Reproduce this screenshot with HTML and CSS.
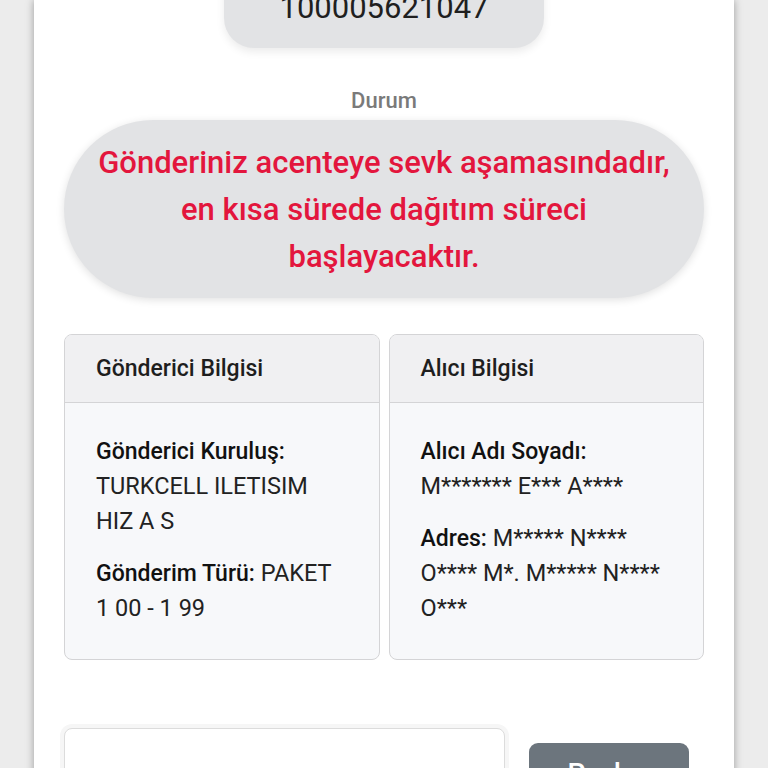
FILE: index.html
```html
<!DOCTYPE html>
<html lang="tr">
<head>
<meta charset="utf-8">
<title>Gönderi Takip</title>
<link rel="stylesheet" href="styles.css">
</head>
<body>
<main class="page">
  <div class="code-pill">100005621047</div>
  <div class="status-label">Durum</div>
  <div class="status-pill">Gönderiniz acenteye sevk aşamasındadır,<br>en kısa sürede dağıtım süreci<br>başlayacaktır.</div>
  <section class="cards">
    <div class="card">
      <div class="card-head">Gönderici Bilgisi</div>
      <div class="card-body">
        <p><b>Gönderici Kuruluş:</b><br>TURKCELL ILETISIM<br>HIZ A S</p>
        <p><b>Gönderim Türü:</b> PAKET<br>1 00 - 1 99</p>
      </div>
    </div>
    <div class="card">
      <div class="card-head">Alıcı Bilgisi</div>
      <div class="card-body">
        <p><b>Alıcı Adı Soyadı:</b><br>M******* E*** A****</p>
        <p><b>Adres:</b> M***** N****<br>O**** M*. M***** N****<br>O***</p>
      </div>
    </div>
  </section>
  <section class="query">
    <div class="query-input"></div>
    <button class="query-btn">Paylaş</button>
  </section>
</main>
</body>
</html>
```
FILE: styles.css
```css
html, body {
  margin: 0;
  padding: 0;
  background: #ececec;
  font-family: Roboto, "Noto Sans", "Liberation Sans", sans-serif;
  color: #212529;
  overflow: hidden;
}
.page {
  width: 640px;
  margin: 0 34px;
  padding: 0 30px 40px;
  background: #fff;
  box-shadow: 0 0 8px rgba(0,0,0,0.35);
  min-height: 900px;
  display: flex;
  flex-direction: column;
  align-items: center;
}
.code-pill {
  width: 320px;
  box-sizing: border-box;
  margin-top: -48px;
  padding: 36px 0 20px;
  background: #e2e3e5;
  border-radius: 0 0 30px 30px;
  text-align: center;
  font-size: 31px;
  line-height: 40px;
  color: #1f1f1f;
  box-shadow: 0 4px 8px rgba(0,0,0,0.08);
}
.status-label {
  margin-top: 40px;
  font-size: 22px;
  line-height: 26px;
  color: #7a7a7a;
  font-weight: 500;
}
.status-pill {
  align-self: stretch;
  margin-top: 6px;
  background: #e2e3e5;
  border-radius: 90px;
  padding: 19px 10px 18px;
  text-align: center;
  font-size: 31px;
  line-height: 47px;
  font-weight: 500;
  color: #e3163d;
  box-shadow: 0 2px 8px rgba(0,0,0,0.12);
}
.cards {
  align-self: stretch;
  margin-top: 36px;
  display: grid;
  grid-template-columns: 1fr 1fr;
  gap: 9px;
}
.card {
  border: 1px solid #d4d4d6;
  border-radius: 8px;
  background: #f7f8fa;
  overflow: hidden;
}
.card-head {
  height: 68px;
  box-sizing: border-box;
  padding: 0 31px;
  display: flex;
  align-items: center;
  background: #f0f0f2;
  border-bottom: 1px solid #d4d4d6;
  font-size: 23px;
  font-weight: 500;
  color: #1e1e1e;
}
.card-body {
  padding: 31px 31px 16px;
  font-size: 23.5px;
  line-height: 35px;
  color: #222;
}
.card-body p {
  margin: 0 0 17px;
}
.card-body b {
  font-size: 23px;
  font-weight: 500;
  color: #111;
}
.query {
  align-self: stretch;
  margin-top: 68px;
  display: flex;
  align-items: flex-start;
}
.query-input {
  width: 441px;
  height: 90px;
  box-sizing: border-box;
  border: 1px solid #dcdcdc;
  border-radius: 8px;
  background: #fff;
  box-shadow: 0 0 0 4px #f6f6f6;
}
.query-btn {
  margin-left: 24px;
  margin-top: 15px;
  width: 160px;
  border: none;
  border-radius: 9px;
  background: #6c757d;
  color: #fff;
  font-family: inherit;
  font-size: 28px;
  font-weight: 500;
  padding: 16px 0 16px;
  line-height: 30px;
  text-align: center;
  align-self: flex-start;
}
```
